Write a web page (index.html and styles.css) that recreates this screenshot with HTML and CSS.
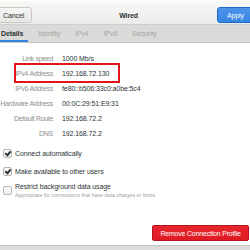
FILE: index.html
```html
<!DOCTYPE html>
<html lang="en">
<head>
  <meta charset="UTF-8">
  <title>Wired</title>
  <link rel="stylesheet" href="styles.css">
</head>
<body>
  <div class="window">
    <!-- Header Bar -->
    <div class="header">
      <button class="btn btn-cancel">Cancel</button>
      <span class="title">Wired</span>
      <button class="btn btn-apply">Apply</button>
    </div>

    <!-- Tabs -->
    <div class="tabs">
      <span class="tab active">Details</span>
      <span class="tab">Identity</span>
      <span class="tab">IPv4</span>
      <span class="tab">IPv6</span>
      <span class="tab">Security</span>
    </div>

    <!-- Details -->
    <div class="content">
      <div class="info">
        <span class="label">Link speed</span><span class="value">1000 Mb/s</span>
        <span class="label">IPv4 Address</span><span class="value">192.168.72.130</span>
        <span class="label">IPv6 Address</span><span class="value">fe80::b506:33c0:a0be:5c4</span>
        <span class="label">Hardware Address</span><span class="value">00:0C:29:51:E9:31</span>
        <span class="label">Default Route</span><span class="value">192.168.72.2</span>
        <span class="label">DNS</span><span class="value">192.168.72.2</span>
      </div>
      <div class="highlight"></div>

      <div class="options">
        <label class="check"><span class="box checked"></span>Connect automatically</label>
        <label class="check"><span class="box checked"></span>Make available to other users</label>
        <label class="check multi">
          <span class="box"></span>
          <span class="check-text">
            Restrict background data usage
            <small>Appropriate for connections that have data charges or limits.</small>
          </span>
        </label>
      </div>

      <div class="actions">
        <button class="btn btn-remove">Remove Connection Profile</button>
      </div>
    </div>
    <div class="bottom"></div>
  </div>
</body>
</html>
```

FILE: styles.css
```css
/*--------------------------------------------------------------
# Global Styles
--------------------------------------------------------------*/
* {
  margin: 0;
  padding: 0;
  box-sizing: border-box;
}

body {
  font-family: "Liberation Sans", Arial, sans-serif;
  font-size: 7px;
  letter-spacing: -0.1px;
  color: #2e3436;
  background: #fff;
  width: 250px;
  height: 250px;
  overflow: hidden;
}

.window {
  position: relative;
  height: 250px;
  display: flex;
  flex-direction: column;
}

/*--------------------------------------------------------------
# Header Bar
--------------------------------------------------------------*/
.header {
  height: 24px;
  display: flex;
  align-items: center;
  justify-content: space-between;
  padding-top: 5px;
  background: linear-gradient(#f8f8f7, #ebebea);
  border-top: 1px solid #fff;
}

.btn {
  font-family: inherit;
  font-size: 7px;
  letter-spacing: -0.1px;
  height: 16px;
  border-radius: 3px;
  cursor: pointer;
}

.btn-cancel {
  margin-left: -4px;
  padding: 0 7px 0 6px;
  background: linear-gradient(#f6f6f5, #e6e6e4);
  border: 1px solid #cdc7c2;
  color: #2e3436;
}

.title {
  font-weight: bold;
  margin-left: 8px;
}

.btn-apply {
  margin-right: -6px;
  padding: 0 11px 0 9px;
  background: linear-gradient(#4d94e8, #3584e4);
  border: 1px solid #1b6acb;
  color: #fff;
}

/*--------------------------------------------------------------
# Tabs
--------------------------------------------------------------*/
.tabs {
  height: 19px;
  display: flex;
  align-items: stretch;
  gap: 15px;
  background: #dadad8;
  border-top: 1px solid #cfcfcd;
  border-bottom: 1px solid #c8c8c6;
}

.tab {
  display: flex;
  align-items: center;
  padding-top: 1px;
  color: #a6a6a4;
  border-bottom: 2px solid transparent;
}

.tab.active {
  padding: 1px 5px 0 1px;
  margin-right: -5px;
  color: #2e3436;
  font-weight: bold;
  border-bottom-color: #3584e4;
}

/*--------------------------------------------------------------
# Details
--------------------------------------------------------------*/
.content {
  flex: 1;
  display: flex;
  flex-direction: column;
  padding-top: 8px;
}

.info {
  display: grid;
  grid-template-columns: 53px 1fr;
  column-gap: 9px;
  grid-auto-rows: 15px;
  align-items: center;
}

.label {
  text-align: right;
  color: #8e9090;
  white-space: nowrap;
  letter-spacing: -0.3px;
}

.value {
  color: #2e3436;
}

/* Annotation box */
.highlight {
  position: absolute;
  left: 14px;
  top: 63px;
  width: 106px;
  height: 20px;
  border: 2px solid #e3141c;
}

/*--------------------------------------------------------------
# Options
--------------------------------------------------------------*/
.options {
  display: flex;
  flex-direction: column;
  gap: 8px;
  padding: 7px 0 0 3px;
}

.check {
  display: flex;
  align-items: center;
  gap: 3px;
  height: 10px;
}

.check.multi {
  height: 19px;
  margin-top: -3px;
}

.box {
  width: 9px;
  height: 9px;
  flex: none;
  border: 1px solid #b6b6b3;
  border-radius: 2px;
  background: linear-gradient(#fff, #eeeeec);
  position: relative;
}

.box.checked::after {
  content: "";
  position: absolute;
  left: 2px;
  top: 0;
  width: 2px;
  height: 4px;
  border: solid #2e3436;
  border-width: 0 2px 2px 0;
  transform: rotate(40deg);
}

.check-text {
  display: flex;
  flex-direction: column;
  line-height: 9px;
}

.check-text small {
  font-size: 5.3px;
  letter-spacing: 0;
  color: #a0a0a0;
  line-height: 9px;
}

/*--------------------------------------------------------------
# Actions
--------------------------------------------------------------*/
.actions {
  margin-top: auto;
  display: flex;
  justify-content: flex-end;
  padding: 0 1px 4px 0;
}

.btn-remove {
  width: 97px;
  padding: 0;
  letter-spacing: -0.2px;
  background: linear-gradient(#e8262e, #de1a22);
  border: 1px solid #b3161d;
  border-radius: 2px;
  color: #fff;
}

.bottom {
  height: 5px;
  background: #dcdcda;
  border-top: 1px solid #c6c6c4;
}
```
